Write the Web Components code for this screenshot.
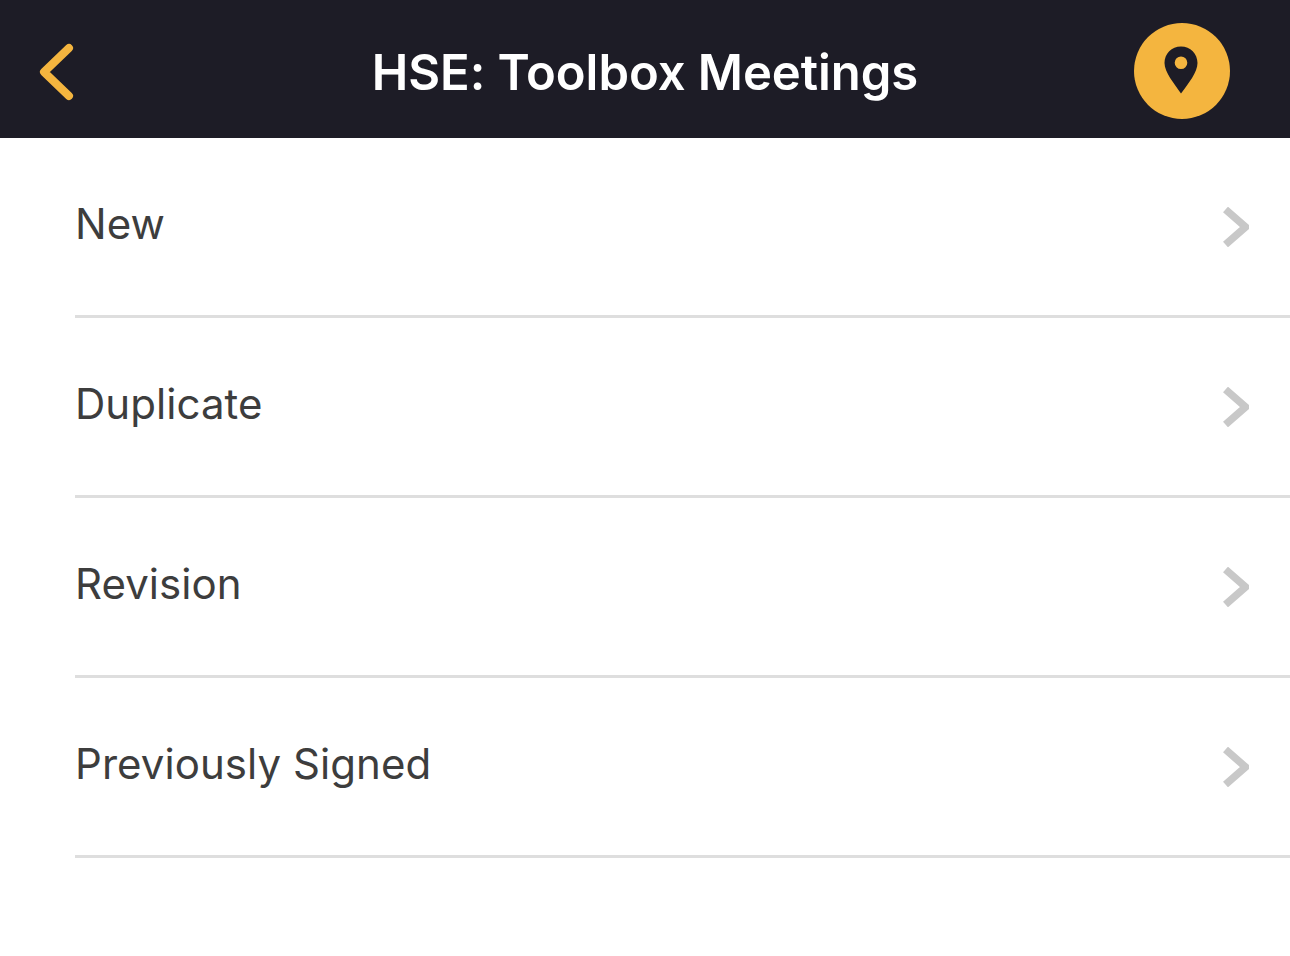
<!DOCTYPE html>
<html><head><meta charset="utf-8">
<style>html,body{margin:0;padding:0;background:#fff}body{width:1290px;height:956px;overflow:hidden;font-family:Inter,"Liberation Sans",sans-serif}</style>
</head><body>
<app-screen>
  <app-header slot="header" title-text="HSE: Toolbox Meetings"></app-header>
  <menu-row>New</menu-row>
  <menu-row>Duplicate</menu-row>
  <menu-row>Revision</menu-row>
  <menu-row>Previously Signed</menu-row>
</app-screen>
<script>
class AppScreen extends HTMLElement{constructor(){super();this.attachShadow({mode:'open'}).innerHTML=`<style>:host{display:flex;flex-direction:column;width:1290px;height:956px;background:#fff}.list{display:flex;flex-direction:column}</style><slot name="header"></slot><div class="list"><slot></slot></div>`}}
class AppHeader extends HTMLElement{constructor(){super();this.attachShadow({mode:'open'}).innerHTML=`<style>
:host{display:grid;grid-template-columns:1fr auto 1fr;align-items:center;height:138px;box-sizing:border-box;padding-top:4px;background:#1d1c26;color:#fff}
.back{display:block;margin-left:36px}
h1{margin:0;padding-top:2px;font:600 49px/1 Inter,"Liberation Sans",sans-serif;letter-spacing:-.05px;white-space:nowrap}
.r{justify-self:end;margin-right:60px;width:96px;height:96px;border-radius:50%;background:#f4b53f;display:flex;align-items:center;justify-content:center}
</style>
<svg class="back" width="44" height="64" viewBox="0 0 44 64"><path d="M33 12 8 36 33 60" transform="translate(0 -3)" fill="none" stroke="#f4b53f" stroke-width="8" stroke-linecap="round" stroke-linejoin="round"/></svg>
<h1></h1>
<div class="r"><svg width="36" height="50" viewBox="0 0 36 50"><path fill="#1d1c26" fill-rule="evenodd" d="M17 .500C7.600 .500 .5 7.900 .5 17c0 9 9.500 20.500 16.500 30.500C24.500 37.500 33.500 26 33.500 17 33.500 7.900 26.400 .500 17 .500ZM17 10.500a6.300 6.300 0 1 1 0 12.600 6.300 6.300 0 0 1 0-12.600Z"/></svg></div>`;this.shadowRoot.querySelector('h1').textContent=this.getAttribute('title-text')}}
class MenuRow extends HTMLElement{constructor(){super();this.attachShadow({mode:'open'}).innerHTML=`<style>
:host{display:block;height:180px;box-sizing:border-box;margin-left:75px;border-bottom:3px solid #dedede;color:#3d3d3d}
.in{display:flex;align-items:center;justify-content:space-between;height:177px;font:400 42px/1 Inter,"Liberation Sans",sans-serif;letter-spacing:.06px;padding-right:41px}
.t{padding:0 0 6px 0}
svg{display:block}
</style><div class="in"><span class="t"><slot></slot></span><svg width="26" height="40" viewBox="0 0 26 40"><path d="M2.500 2.500 22.500 20 2.500 37.500" fill="none" stroke="#c8c8c8" stroke-width="7.500"/></svg></div>`}}
customElements.define('app-screen',AppScreen);customElements.define('app-header',AppHeader);customElements.define('menu-row',MenuRow);
</script>
</body></html>
